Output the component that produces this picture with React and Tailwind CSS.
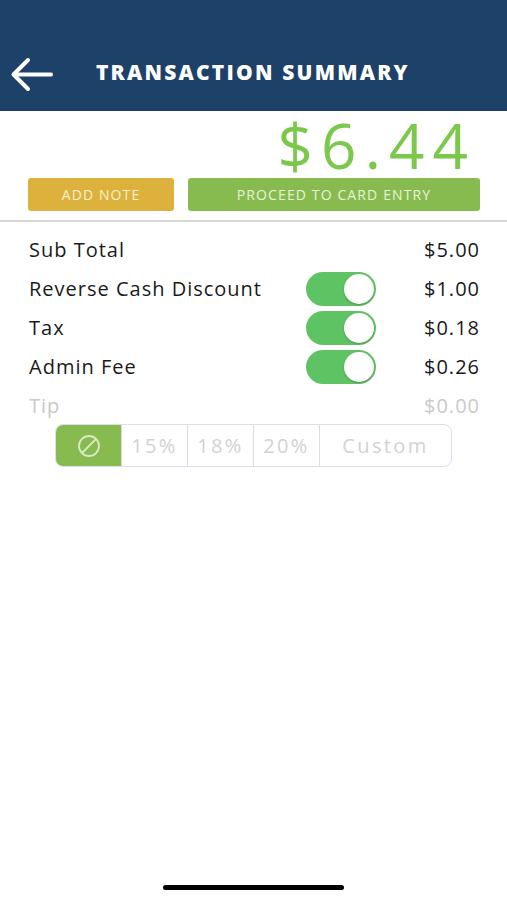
import React, { useState } from 'react';

const font = { fontFamily: '"Open Sans", "Liberation Sans", Arial, sans-serif' };

const Toggle = ({ on, onChange }) => (
  <button
    onClick={onChange}
    className={`relative w-[70px] h-[34px] rounded-full transition ${on ? 'bg-[#5ec463]' : 'bg-[#e5e5ea]'}`}
  >
    <span
      className={`absolute top-[2px] w-[30px] h-[30px] rounded-full bg-white shadow-[0_1px_2px_rgba(0,0,0,0.25)] transition-all ${on ? 'left-[38px]' : 'left-[2px]'}`}
    />
  </button>
);

const Row = ({ label, value, toggle, on, onToggle, muted }) => (
  <div className={`flex items-center h-[39px] text-[20px] tracking-[0.05em] ${muted ? 'text-[#c9c9c9]' : 'text-[#1a1a1a]'}`}>
    <div className="flex-1">{label}</div>
    <div className="w-[70px] flex justify-center">
      {toggle && <Toggle on={on} onChange={onToggle} />}
    </div>
    <div className="w-[104px] text-right -mr-[1px]">{value}</div>
  </div>
);

const App = () => {
  const [toggles, setToggles] = useState({ discount: true, tax: true, admin: true });
  const [tip, setTip] = useState('none');

  const flip = (k) => setToggles((t) => ({ ...t, [k]: !t[k] }));

  return (
    <div className="min-h-[900px] flex flex-col bg-white" style={font}>
      {/* Header */}
      <div className="h-[111px] bg-[#1d4168] flex items-end pb-[19px]">
        <button className="ml-[10px] w-[43px] h-[35px] flex items-center">
          <svg width="43" height="35" viewBox="0 0 43 35" fill="none" stroke="white" strokeWidth="4" strokeLinecap="round" strokeLinejoin="round">
            <path d="M41 17.5H4" />
            <path d="M18 3L3.5 17.5 18 32" />
          </svg>
        </button>
        <h1 className="ml-[43px] mb-[9px] text-white font-extrabold text-[21px] tracking-[0.105em] leading-none">
          TRANSACTION SUMMARY
        </h1>
      </div>

      {/* Total */}
      <div className="flex justify-end pr-[31px] mt-[3px]">
        <span className="text-[62px] leading-none text-[#7cc84b] tracking-[0.13em]">$6.44</span>
      </div>

      {/* Actions */}
      <div className="flex gap-[14px] pl-[28px] pr-[27px] mt-[2px]">
        <button className="w-[146px] h-[33px] rounded-[3px] bg-[#ddb23c] text-[#fbefd0] text-[14px] tracking-[0.08em]">
          ADD NOTE
        </button>
        <button className="flex-1 h-[33px] rounded-[3px] bg-[#88bb4f] text-[#e8f3db] text-[14px] tracking-[0.08em]">
          PROCEED TO CARD ENTRY
        </button>
      </div>

      <div className="mt-[9px] h-[2px] bg-[#d6d6d6]" />

      {/* Summary rows */}
      <div className="pl-[29px] pr-[28px] pt-[8px]">
        <Row label="Sub Total" value="$5.00" />
        <Row label="Reverse Cash Discount" value="$1.00" toggle on={toggles.discount} onToggle={() => flip('discount')} />
        <Row label="Tax" value="$0.18" toggle on={toggles.tax} onToggle={() => flip('tax')} />
        <Row label="Admin Fee" value="$0.26" toggle on={toggles.admin} onToggle={() => flip('admin')} />
        <Row label="Tip" value="$0.00" muted />
      </div>

      {/* Tip selector */}
      <div className="ml-[55px] mt-[-1px] w-[397px] h-[43px] flex rounded-[8px] border border-[#dcdff0] overflow-hidden text-[20px] tracking-[0.12em] text-[#d2d2d2]">
        <button
          onClick={() => setTip('none')}
          className={`w-[65px] flex items-center justify-center ${tip === 'none' ? 'bg-[#88bb4f]' : ''}`}
        >
          <svg width="24" height="24" viewBox="0 0 24 24" fill="none" stroke={tip === 'none' ? '#d9e9c6' : '#d2d2d2'} strokeWidth="1.8">
            <circle cx="12" cy="12" r="10" />
            <path d="M19 5L5 19" />
          </svg>
        </button>
        {['15%', '18%', '20%'].map((p) => (
          <button
            key={p}
            onClick={() => setTip(p)}
            className={`w-[66px] border-l border-[#dcdcdc] ${tip === p ? 'bg-[#88bb4f] text-white' : ''}`}
          >
            {p}
          </button>
        ))}
        <button
          onClick={() => setTip('custom')}
          className={`flex-1 border-l border-[#dcdcdc] ${tip === 'custom' ? 'bg-[#88bb4f] text-white' : ''}`}
        >
          Custom
        </button>
      </div>

      <div className="flex-1" />
      <div className="mx-auto mb-[10px] w-[181px] h-[5px] rounded-full bg-black" />
    </div>
  );
};

export default App;
